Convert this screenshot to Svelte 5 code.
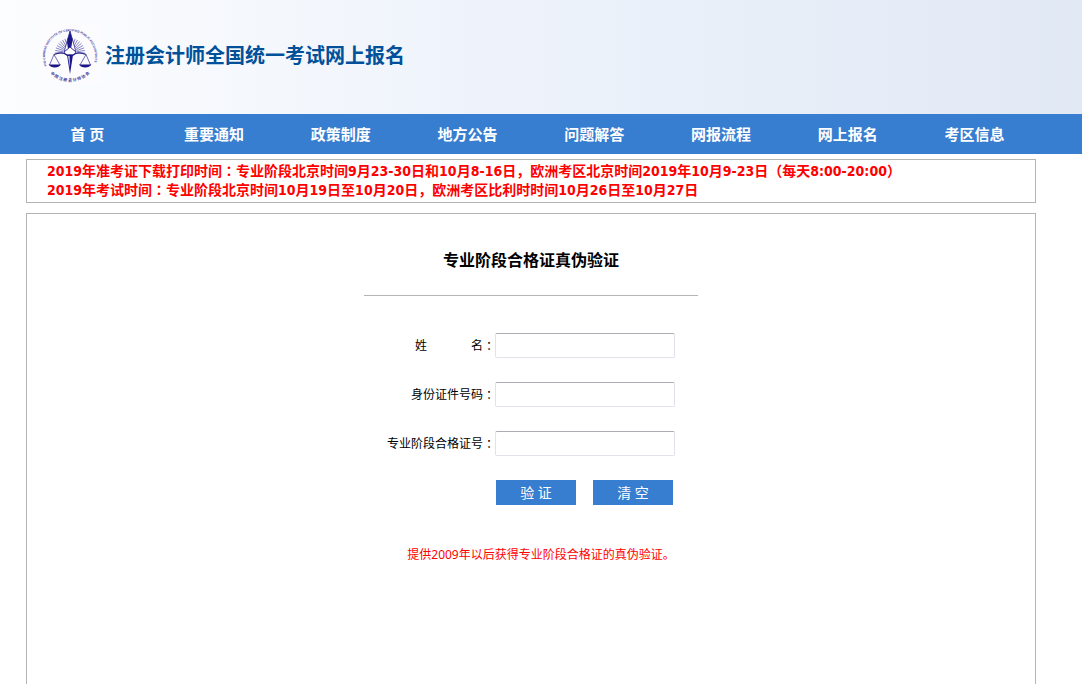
<script lang="ts">
  const navItems = ['首 页', '重要通知', '政策制度', '地方公告', '问题解答', '网报流程', '网上报名', '考区信息'];

  // rays of the half sun behind the scales
  const rays = Array.from({ length: 19 }, (_, i) => {
    const a = Math.PI + (i * Math.PI) / 18;
    return { x: Math.cos(a), y: Math.sin(a) };
  });

  let name = $state('');
  let idNumber = $state('');
  let certNumber = $state('');

  function verify(e: SubmitEvent) {
    e.preventDefault();
  }

  function clear() {
    name = '';
    idNumber = '';
    certNumber = '';
  }
</script>

<div class="page" lang="zh-CN">
  <header>
    <svg class="logo" viewBox="0 0 60 60" aria-hidden="true">
      <defs>
        <path id="ring-top" d="M6 42A25 25 0 1 1 52 42" />
        <path id="ring-bottom" d="M9 49A27.500 27.500 0 0 0 49 49" />
      </defs>
      <rect width="60" height="60" fill="#fcfcfe" />
      <text class="ring"><textPath href="#ring-top">THE CHINESE INSTITUTE OF CERTIFIED PUBLIC ACCOUNTANTS</textPath></text>
      <text class="ring cn"><textPath href="#ring-bottom" startOffset="50%" text-anchor="middle">中 国 注 册 会 计 师 协 会</textPath></text>
      <g transform="translate(-1 0)">
        <g stroke="#5350ab" stroke-width="0.7">
          {#each rays as r}
            <line x1={30 + r.x * 7} y1={29 + r.y * 7} x2={30 + r.x * 15} y2={29 + r.y * 15} />
          {/each}
        </g>
        <path d="M30 7L36 28L30 24L24 28Z" fill="#fff" stroke="#2c2891" stroke-width="0.8" />
        <path d="M30 7L32.500 16L31 25H28L27 18Z" fill="#1c1786" />
        <path d="M24 28L30 23L36 28L34 31H26Z" fill="#fff" stroke="#2c2891" stroke-width="0.9" />
        <path d="M14 30.500Q22 27 27 31H33Q38 27 46 30.500" fill="none" stroke="#2c2891" stroke-width="1.200" />
        <path d="M27 31H33L30 50Z" fill="#1c1786" />
        <path d="M29.500 32L29.800 44L28.200 32Z" fill="#fff" />
        <path d="M14 30.500L9.500 41M14 30.500L20 41M46 30.500L40 41M46 30.500L50.500 41" stroke="#4a47a4" stroke-width="0.8" />
        <path d="M8.500 40.500H21Q19 43.500 14.800 43.500T8.500 40.500ZM39 40.500H51.500Q49.500 43.500 45.200 43.500T39 40.500Z" fill="#1c1786" />
      </g>
    </svg>
    <h1>注册会计师全国统一考试网上报名</h1>
  </header>

  <nav>
    <ul>
      {#each navItems as item}
        <li><a href="#top">{item}</a></li>
      {/each}
    </ul>
  </nav>

  <div class="notice">
    <p>2019年准考证下载打印时间<i lang="zh-TW">：</i>专业阶段北京时间9月23-30日和10月8-16日，欧洲考区北京时间2019年10月9-23日（每天8:00-20:00）</p>
    <p>2019年考试时间<i lang="zh-TW">：</i>专业阶段北京时间10月19日至10月20日，欧洲考区比利时时间10月26日至10月27日</p>
  </div>

  <main>
    <h2>专业阶段合格证真伪验证</h2>
    <form onsubmit={verify}>
      <label for="name"><span class="spread"><span>姓</span><span>名</span></span><i lang="zh-TW">：</i></label>
      <input id="name" type="text" bind:value={name} />
      <label for="id-number">身份证件号码<i lang="zh-TW">：</i></label>
      <input id="id-number" type="text" bind:value={idNumber} />
      <label for="cert-number">专业阶段合格证号<i lang="zh-TW">：</i></label>
      <input id="cert-number" type="text" bind:value={certNumber} />
      <div class="buttons">
        <button type="submit">验 证</button>
        <button type="button" onclick={clear}>清 空</button>
      </div>
    </form>
    <p class="tip">提供2009年以后获得专业阶段合格证的真伪验证。</p>
  </main>
</div>

<style>
  :global(body) {
    margin: 0;
    background: #fff;
  }

  .page {
    min-height: 100vh;
    display: flex;
    flex-direction: column;
    font-family: 'Noto Sans', 'Noto Sans CJK SC', sans-serif;
    font-size: 12px;
    color: #000;
  }

  header {
    height: 114px;
    display: flex;
    align-items: center;
    gap: 4px;
    box-sizing: border-box;
    padding: 0 41px 6px;
    background: linear-gradient(90deg, #fcfdfe, #eef3fb 45%, #e1e9f5);
  }

  .logo {
    width: 60px;
    height: 60px;
    flex: none;
  }

  .ring {
    font-family: 'Liberation Sans', sans-serif;
    font-size: 3px;
    font-weight: bold;
    fill: #3b3899;
  }

  .ring.cn {
    font-family: 'Noto Sans CJK SC', sans-serif;
    font-size: 4px;
  }

  h1 {
    margin: 0;
    padding-top: 4px;
    font-size: 20px;
    line-height: 28px;
    color: #00519a;
  }

  nav {
    background: #377dd0;
    padding: 0 44px 0 24px;
  }

  ul {
    display: flex;
    max-width: 1014px;
    margin: 0;
    padding: 0;
    list-style: none;
  }

  li {
    flex: 1;
    text-align: center;
  }

  li a {
    display: block;
    font-size: 15px;
    font-weight: bold;
    line-height: 40px;
    color: #fff;
    text-decoration: none;
    white-space: nowrap;
  }

  /* full-width colon set in the middle of its cell */
  i {
    font-family: 'Noto Sans CJK TC', sans-serif;
    font-style: normal;
  }

  .notice,
  main {
    max-width: 1008px;
    margin: 5px 46px 0 26px;
    border: 1px solid #b5b5b5;
  }

  .notice {
    padding: 2px 20px;
    font-family: 'DejaVu Sans Condensed', 'Noto Sans CJK SC', sans-serif;
    font-size: 14px;
    font-weight: bold;
    color: #f00;
  }

  .notice p {
    margin: 0;
    line-height: 19px;
  }

  .notice i {
    line-height: 14px;
  }

  main {
    flex: 1;
    display: flex;
    flex-direction: column;
    align-items: center;
    margin-top: 10px;
    border-bottom: 0;
  }

  h2 {
    width: 334px;
    margin: 34px 0 37px;
    padding-bottom: 23px;
    border-bottom: 1px solid #b5b5b5;
    font-size: 16px;
    line-height: 24px;
    text-align: center;
  }

  form {
    display: grid;
    grid-template-columns: 109px 180px;
    gap: 24px 0;
    padding-right: 1px;
  }

  label {
    display: flex;
    justify-content: flex-end;
    line-height: 25px;
    white-space: nowrap;
  }

  .spread {
    display: flex;
    justify-content: space-between;
    width: 68px;
  }

  input {
    box-sizing: border-box;
    width: 100%;
    height: 25px;
    padding: 2px 4px;
    border: 1px solid #e2e3ea;
    border-top-color: #abadb3;
    border-radius: 2px;
    font: inherit;
  }

  .buttons {
    grid-column: 2;
    display: flex;
    gap: 17px;
    padding-left: 1px;
  }

  button {
    width: 80px;
    height: 25px;
    padding: 0;
    border: 0;
    background: #377dd0;
    color: #fff;
    font-family: inherit;
    font-size: 14px;
    line-height: 24px;
    cursor: pointer;
  }

  .tip {
    margin: 40px 0 24px;
    padding-left: 20px;
    line-height: 20px;
    color: #f00;
  }
</style>
